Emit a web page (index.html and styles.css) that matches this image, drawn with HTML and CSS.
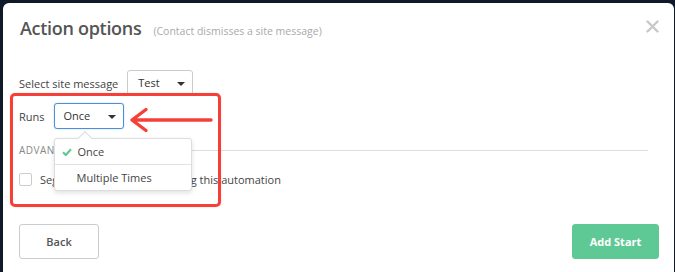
FILE: index.html
```html
<!DOCTYPE html>
<html lang="en">
<head>
	<meta charset="utf-8" />
	<title>Action options</title>
	<link rel="stylesheet" href="styles.css">
</head>
<body>
	<div class="modal">
		<div class="modal-header">
			<h2 class="title">Action options</h2>
			<span class="subtitle">(Contact dismisses a site message)</span>
			<svg class="close" width="13" height="13" viewBox="0 0 13 13">
				<path d="M1.5 1.5 L11.5 11.5 M11.5 1.5 L1.5 11.5" stroke="#c8c8c8" stroke-width="2.4" stroke-linecap="round"/>
			</svg>
		</div>

		<div class="modal-body">
			<div class="field-row">
				<label class="field-label">Select site message</label>
				<div class="select select-test">Test<span class="caret"></span></div>
			</div>
			<div class="field-row">
				<label class="field-label">Runs</label>
				<div class="select-wrap">
					<div class="select select-runs select-focus">Once<span class="caret"></span></div>
					<div class="dropdown">
						<div class="dropdown-item selected">
							<svg class="check" width="10" height="8" viewBox="0 0 10 8">
								<path d="M1 4.2 L3.8 7 L9 1.2" fill="none" stroke="#5ec994" stroke-width="2.2"/>
							</svg>
							Once
						</div>
						<div class="dropdown-item">Multiple Times</div>
					</div>
				</div>
			</div>

			<div class="section-title">
				<span>Advanced options</span>
				<span class="rule"></span>
			</div>

			<div class="check-row">
				<span class="checkbox"></span>
				<span>Segment the contacts entering this automation</span>
			</div>
		</div>

		<div class="modal-footer">
			<button class="btn">Back</button>
			<button class="btn btn-primary">Add Start</button>
		</div>

		<!-- annotation drawn over the screenshot -->
		<div class="mark-box"></div>
		<svg class="mark-arrow" width="90" height="30" viewBox="0 0 90 30">
			<path d="M5 15 L84 15 M19 4.5 L5 15 L19 25.5" fill="none" stroke="#f5403a" stroke-width="3.4" stroke-linecap="round" stroke-linejoin="round"/>
		</svg>
	</div>
</body>
</html>
```

FILE: styles.css
```css
html,
body
{
	margin: 0;
	height: 100%;
}

body
{
	background-color: #0f1a29;
	font-family: "Open Sans", "Liberation Sans", sans-serif;
	color: #444;
	overflow: hidden;
}

.modal
{
	position: relative;
	margin: 3px 1px 0 3px;
	height: 280px;
	background-color: #fff;
	border-radius: 6px 6px 0 0;
}

.modal-header
{
	display: flex;
	align-items: baseline;
	padding: 11px 15px 0 17px;
	height: 28px;
}

.title
{
	margin: 0;
	font-size: 18px;
	font-weight: 600;
	letter-spacing: -0.3px;
	line-height: 28px;
	color: #555;
}

.subtitle
{
	margin-left: 12px;
	font-size: 10.5px;
	color: #aaa;
}

.close
{
	align-self: flex-start;
	margin-left: auto;
	margin-top: 6px;
}

.modal-body
{
	padding: 28px 26px 0 16px;
}

.field-row
{
	display: flex;
	align-items: center;
	height: 26px;
	margin-bottom: 7px;
	font-size: 11px;
}

.field-label
{
	margin-right: 9px;
	color: #444;
}

.select
{
	position: relative;
	box-sizing: border-box;
	height: 26px;
	line-height: 24px;
	padding-left: 10px;
	border: 1px solid #ccc;
	border-radius: 3px;
	font-size: 11px;
	color: #333;
	background-color: #fff;
}

.select-test
{
	width: 66px;
}

.select-runs
{
	width: 70px;
	padding-left: 9px;
}

.select-focus
{
	border-color: #4a90d9;
	box-shadow: 0 0 2px rgba(74, 144, 217, 0.4);
}

.caret
{
	position: absolute;
	right: 7px;
	top: 11px;
	width: 0;
	height: 0;
	border-left: 4px solid transparent;
	border-right: 4px solid transparent;
	border-top: 4px solid #333;
}

.select-wrap
{
	position: relative;
}

.dropdown
{
	position: absolute;
	left: 0;
	top: 35px;
	width: 138px;
	box-sizing: border-box;
	background-color: #fff;
	border: 1px solid #ddd;
	border-radius: 3px;
	box-shadow: 0 2px 5px rgba(0, 0, 0, 0.12);
	z-index: 2;
}

.dropdown::before
{
	content: "";
	position: absolute;
	left: 25px;
	top: -6px;
	width: 9px;
	height: 9px;
	background-color: #fff;
	border-left: 1px solid #ddd;
	border-top: 1px solid #ddd;
	transform: rotate(45deg);
}

.dropdown-item
{
	display: flex;
	align-items: center;
	height: 25px;
	padding-left: 22px;
	font-size: 11px;
	color: #444;
}

.dropdown-item.selected
{
	padding-left: 7px;
	border-bottom: 1px solid #e2e2e2;
}

.check
{
	margin-right: 6px;
}

.section-title
{
	display: flex;
	align-items: center;
	margin-top: 14px;
	height: 14px;
	font-size: 10px;
	letter-spacing: 0.5px;
	text-transform: uppercase;
	color: #888;
}

.rule
{
	flex: 1;
	height: 1px;
	margin-left: 8px;
	background-color: #ddd;
}

.check-row
{
	display: flex;
	align-items: center;
	margin-top: 14px;
	height: 16px;
	font-size: 11px;
	color: #444;
}

.checkbox
{
	box-sizing: border-box;
	width: 13px;
	height: 13px;
	margin-right: 8px;
	border: 1px solid #ccc;
	border-radius: 2px;
}

.modal-footer
{
	display: flex;
	justify-content: space-between;
	padding: 0 15px 0 16px;
	margin-top: 37px;
}

.btn
{
	box-sizing: border-box;
	height: 35px;
	width: 80px;
	border: 1px solid #ccc;
	border-radius: 3px;
	background-color: #fff;
	font-family: "Open Sans", "Liberation Sans", sans-serif;
	font-size: 11px;
	font-weight: 600;
	color: #555;
	cursor: pointer;
}

.btn-primary
{
	width: 87px;
	border-color: #5fc995;
	background-color: #5fc995;
	color: #fff;
	font-weight: 700;
}

.mark-box
{
	position: absolute;
	left: 7px;
	top: 90px;
	width: 211px;
	height: 114px;
	box-sizing: border-box;
	border: 3px solid #f5403a;
	border-radius: 5px;
	box-shadow: 0 0 1px rgba(245, 64, 58, 0.6);
	z-index: 3;
}

.mark-arrow
{
	position: absolute;
	left: 124px;
	top: 102px;
	z-index: 3;
}
```
